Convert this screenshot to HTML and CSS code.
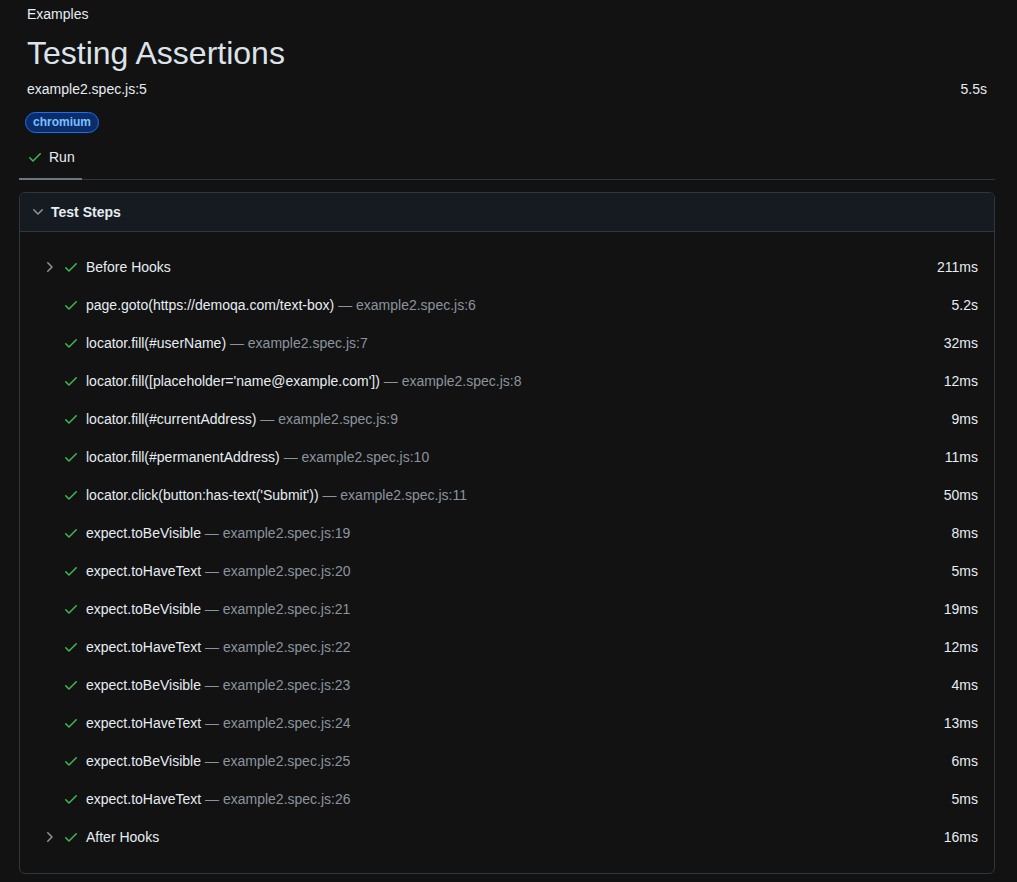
FILE: index.html
```html
<!DOCTYPE html>
<html>
<head>
<meta charset="utf-8">
<link rel="stylesheet" href="styles.css">
</head>
<body>
<div class="page">
  <div class="head">
    <div class="project">Examples</div>
    <h1 class="title">Testing Assertions</h1>
    <div class="meta">
      <span>example2.spec.js:5</span>
      <span>5.5s</span>
    </div>
    <div class="labels"><span class="label">chromium</span></div>
  </div>
  <div class="tabs">
    <div class="tab">
      <svg class="icon green" viewBox="0 0 16 16" width="16" height="16"><path d="M13.78 4.22a.75.75 0 0 1 0 1.06l-7.25 7.25a.75.75 0 0 1-1.06 0L2.22 9.28a.751.751 0 0 1 .018-1.042.751.751 0 0 1 1.042-.018L6 10.94l6.72-6.72a.75.75 0 0 1 1.060 0Z"/></svg>
      <span>Run</span>
    </div>
  </div>
  <div class="card">
    <div class="card-head">
      <svg class="icon gray" viewBox="0 0 16 16" width="16" height="16"><path d="M12.78 5.22a.749.749 0 0 1 0 1.06l-4.25 4.25a.749.749 0 0 1-1.06 0L3.22 6.28a.749.749 0 1 1 1.06-1.06L8 8.939l3.72-3.719a.749.749 0 0 1 1.06 0Z"/></svg>
      <span>Test Steps</span>
    </div>
    <div class="steps" id="steps"></div>
  </div>
</div>
<script src="app.js"></script>
</body>
</html>
```
FILE: app.js
```js
const steps = [
  [true, "Before Hooks", "", "211ms"],
  [false, "page.goto(https://demoqa.com/text-box)", "example2.spec.js:6", "5.2s"],
  [false, "locator.fill(#userName)", "example2.spec.js:7", "32ms"],
  [false, "locator.fill([placeholder='name@example.com'])", "example2.spec.js:8", "12ms"],
  [false, "locator.fill(#currentAddress)", "example2.spec.js:9", "9ms"],
  [false, "locator.fill(#permanentAddress)", "example2.spec.js:10", "11ms"],
  [false, "locator.click(button:has-text('Submit'))", "example2.spec.js:11", "50ms"],
  [false, "expect.toBeVisible", "example2.spec.js:19", "8ms"],
  [false, "expect.toHaveText", "example2.spec.js:20", "5ms"],
  [false, "expect.toBeVisible", "example2.spec.js:21", "19ms"],
  [false, "expect.toHaveText", "example2.spec.js:22", "12ms"],
  [false, "expect.toBeVisible", "example2.spec.js:23", "4ms"],
  [false, "expect.toHaveText", "example2.spec.js:24", "13ms"],
  [false, "expect.toBeVisible", "example2.spec.js:25", "6ms"],
  [false, "expect.toHaveText", "example2.spec.js:26", "5ms"],
  [true, "After Hooks", "", "16ms"]
];
const chev = '<svg class="icon gray" viewBox="0 0 16 16" width="16" height="16"><path d="M6.22 3.22a.75.75 0 0 1 1.06 0l4.25 4.25a.75.75 0 0 1 0 1.06l-4.25 4.25a.751.751 0 0 1-1.042-.018.751.751 0 0 1-.018-1.042L9.94 8 6.22 4.28a.75.75 0 0 1 0-1.06Z"/></svg>';
const check = '<svg class="icon green" viewBox="0 0 16 16" width="16" height="16"><path d="M13.78 4.22a.75.75 0 0 1 0 1.06l-7.25 7.25a.75.75 0 0 1-1.06 0L2.22 9.28a.751.751 0 0 1 .018-1.042.751.751 0 0 1 1.042-.018L6 10.94l6.72-6.72a.75.75 0 0 1 1.06 0Z"/></svg>';
const root = document.getElementById("steps");
root.innerHTML = steps.map(([exp, title, loc, dur]) =>
  `<div class="step">
    <span class="twist">${exp ? chev : ""}</span>
    ${check}
    <span class="step-title">${title}${loc ? ` <span class="loc">— ${loc}</span>` : ""}</span>
    <span class="dur">${dur}</span>
  </div>`).join("");
```
FILE: styles.css
```css
* { box-sizing: border-box; }
html, body { margin: 0; background: #121212; }
body {
  font-family: "Liberation Sans", Arial, sans-serif;
  font-size: 14px;
  color: #e6edf3;
}
.page { padding: 0 22px 9px 19px; }
.head { padding: 0 8px; }
.project { height: 29px; line-height: 29px; padding-top: 0; }
.title {
  margin: 0;
  font-size: 32px;
  font-weight: 400;
  line-height: 48px;
  color: #dde3ea;
}
.meta {
  display: flex;
  justify-content: space-between;
  line-height: 24px;
  height: 24px;
}
.labels { padding: 11px 0 0 0; height: 43px; margin-left: -2px; }
.label {
  display: inline-block;
  height: 21px;
  line-height: 19px;
  padding: 0 7px;
  border: 1px solid #1f6feb;
  border-radius: 11px;
  background: #0c2d6b;
  color: #79c0ff;
  font-size: 12px;
  font-weight: 700;
}
.tabs {
  display: flex;
  border-bottom: 1px solid #30363d;
  margin-bottom: 12px;
}
.tab {
  display: flex;
  align-items: center;
  gap: 6px;
  padding: 0 8px 9px 8px;
  height: 36px;
  margin-bottom: -1px;
  border-bottom: 2px solid #6e7681;
  width: 63px;
}
.icon { display: block; flex: none; }
.green { fill: #3fb950; }
.gray { fill: #8b949e; }
.card {
  border: 1px solid #30363d;
  border-radius: 6px;
  overflow: hidden;
}
.card-head {
  display: flex;
  align-items: center;
  gap: 5px;
  height: 39px;
  padding-left: 10px;
  background: #161b22;
  border-bottom: 1px solid #30363d;
  font-weight: 700;
}
.steps { padding: 16px 16px 17px 21px; }
.step {
  display: flex;
  align-items: center;
  height: 38px;
  gap: 6px;
}
.twist { width: 16px; height: 16px; flex: none; }
.step-title { flex: 1; margin-left: 1px; white-space: nowrap; }
.loc { color: #8b949e; }
.dur { flex: none; }
```
